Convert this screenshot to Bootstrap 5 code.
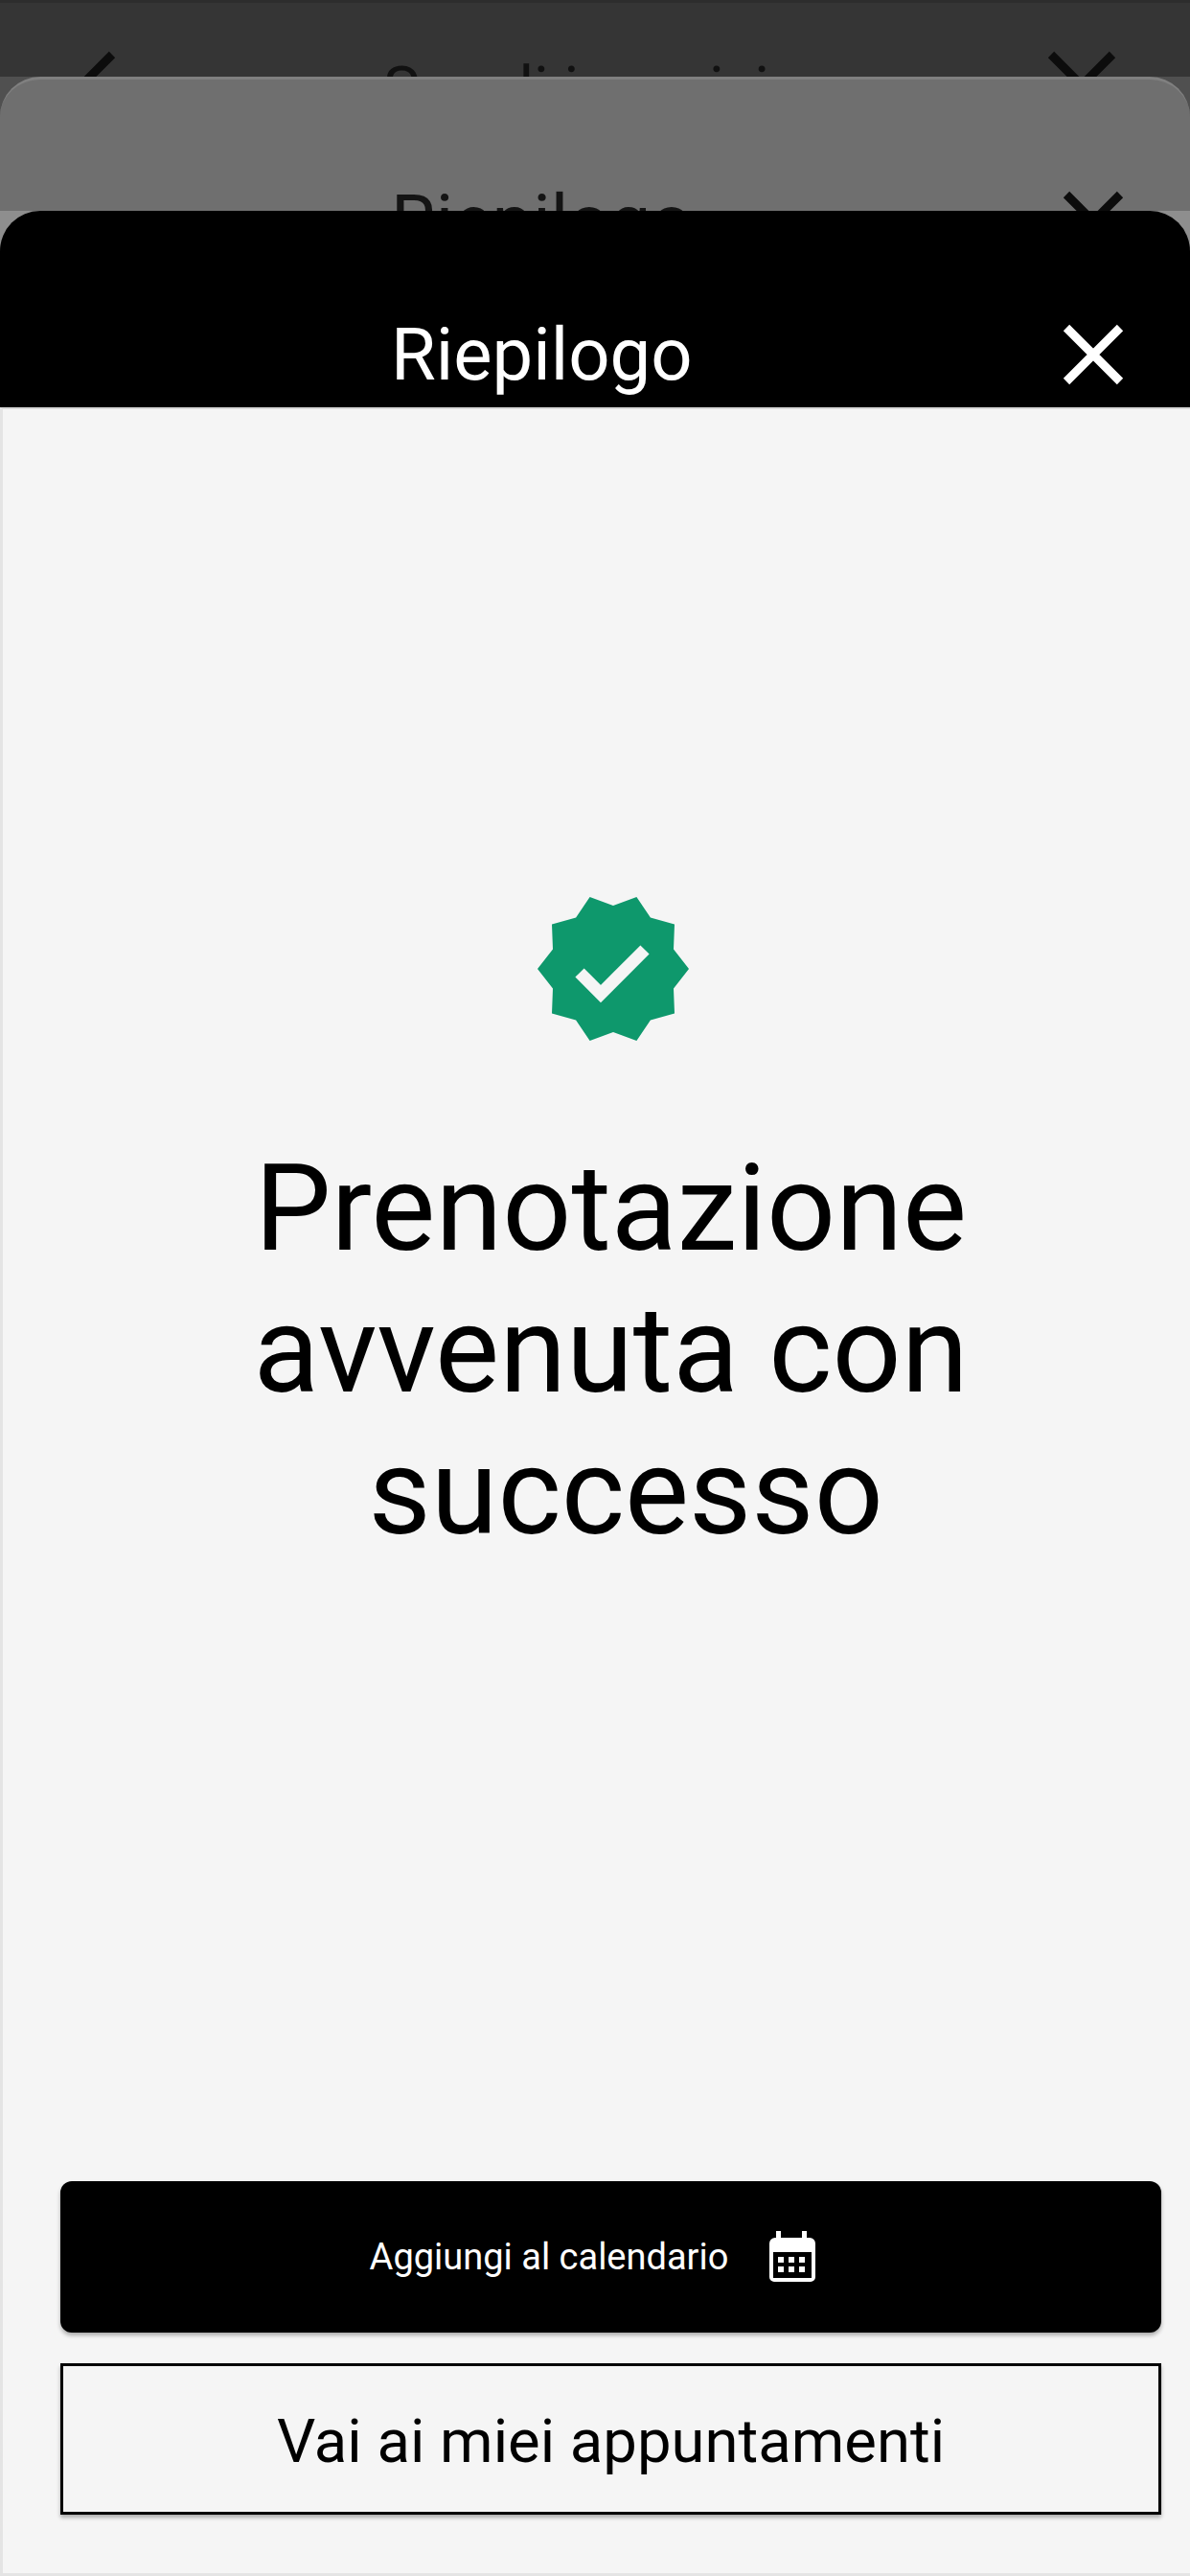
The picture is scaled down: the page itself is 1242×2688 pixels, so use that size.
<!DOCTYPE html>
<html lang="it">

<head>
  <meta charset="UTF-8">
  <title>Riepilogo</title>
  <link href="https://cdn.jsdelivr.net/npm/bootstrap@5.3.2/dist/css/bootstrap.min.css" rel="stylesheet">
  <style>
    body { background: #f5f5f5; font-family: Roboto, "Liberation Sans", sans-serif; }
    .schermo { height: 2688px; }
    .testa-base { height: 80px; background: #353535; border-top: 3px solid #2d2d2d; color: #111; }
    .testa-base .titolo { font-size: 64px; padding-left: 400px; padding-top: 49px; margin-left: -135px; }
    .testa-base .chiudi { margin-right: 75px; margin-top: 48px; }
    .chevron { margin-left: 75px; margin-top: 46px; }
    .dietro-media { background: #505050; }
    .foglio-medio { height: 140px; background: #6f6f6f; border-radius: 42px 42px 0 0; border-top: 3px solid #808080; color: #141414; }
    .dietro-nero { background: #8e8e8e; }
    .foglio-nero { height: 205px; background: #000; border-radius: 42px 42px 0 0; color: #fff; }
    .titolo { font-size: 76px; line-height: 84px; padding-left: 408px; padding-top: 108px; white-space: nowrap; }
    .foglio-medio .titolo { padding-top: 106px; }
    .chiudi { margin-right: 68px; margin-top: 117px; }
    .foglio-medio .chiudi { margin-top: 115px; }
    .contenuto { padding: 0 30px 61px 60px; border-left: 3px solid #e4e4e4; border-bottom: 3px solid #e4e4e4; border-top: 2px solid #d8d8d8; }
    .medaglia { margin-top: 504px; margin-left: 4px; }
    .messaggio { font-size: 126.5px; line-height: 148px; margin: 96px 0 0; font-weight: 400; color: #000; white-space: pre; }
    .pulsanti { gap: 32px; }
    .btn-calendario { height: 158px; background: #000; color: #fff; font-size: 38px; border: 0; border-radius: 12px; box-shadow: 0 3px 4px rgba(0, 0, 0, .3); }
    .btn-calendario:hover { background: #000; color: #fff; }
    .icona-calendario { margin-left: 43px; margin-right: 38px; }
    .btn-appuntamenti { height: 158px; padding-top: 12px; background: transparent; color: #000; font-size: 63.4px; border: 3px solid #000; border-radius: 0; box-shadow: 0 3px 4px rgba(0, 0, 0, .3); }
  </style>
</head>

<body>

  <div class="schermo d-flex flex-column">

    <div class="testa-base d-flex overflow-hidden">
      <svg class="chevron flex-shrink-0" width="60" height="90" viewBox="0 0 60 90"><path d="M42 8 L8 42 L42 76" fill="none" stroke="#0c0c0c" stroke-width="9"/></svg>
      <div class="titolo">Scegli i servizi</div>
      <svg class="chiudi ms-auto flex-shrink-0" width="76" height="76" viewBox="-38 -38 76 76"><path d="M-32 -32 L32 32 M32 -32 L-32 32" fill="none" stroke="#0c0c0c" stroke-width="9"/></svg>
    </div>

    <div class="dietro-media">
      <div class="foglio-medio d-flex overflow-hidden">
        <div class="titolo">Riepilogo</div>
        <svg class="chiudi ms-auto flex-shrink-0" width="66" height="66" viewBox="-33 -33 66 66"><path d="M-28 -28 L28 28 M28 -28 L-28 28" fill="none" stroke="#0c0c0c" stroke-width="9"/></svg>
      </div>
    </div>

    <div class="dietro-nero">
      <div class="foglio-nero d-flex overflow-hidden">
        <div class="titolo">Riepilogo</div>
        <svg class="chiudi ms-auto flex-shrink-0" width="66" height="66" viewBox="-33 -33 66 66"><path d="M-28 -28 L28 28 M28 -28 L-28 28" fill="none" stroke="#fff" stroke-width="9"/></svg>
      </div>
    </div>

    <div class="contenuto flex-grow-1 d-flex flex-column align-items-center">
      <svg class="medaglia" width="160" height="160" viewBox="-80 -80 160 160">
        <polygon fill="#0e986c" points="79,0 63,20.5 64,46.5 38.9,53.5 24.4,75.1 0,66 -24.4,75.1 -38.9,53.5 -64,46.5 -63,20.5 -79,0 -63,-20.5 -64,-46.5 -38.9,-53.5 -24.4,-75.1 0,-66 24.4,-75.1 38.9,-53.5 64,-46.5 63,-20.5"/>
        <path d="M-35 4 L-13 26 L33 -20" fill="none" stroke="#f5f5f5" stroke-width="13"/>
      </svg>

      <h1 class="messaggio text-center">Prenotazione
avvenuta con
 successo</h1>

      <div class="pulsanti mt-auto w-100 d-flex flex-column">
        <button class="btn btn-calendario w-100 d-flex align-items-center justify-content-center">
          <span>Aggiungi al calendario</span>
          <svg class="icona-calendario flex-shrink-0" width="48" height="54" viewBox="0 0 48 54">
            <path fill="#fff" d="M7 0h5v7h22v-7h5v7h3a6 6 0 0 1 6 6v35a5 5 0 0 1-5 5h-38a5 5 0 0 1-5-5v-35a6 6 0 0 1 6-6h1z"/>
            <rect x="4" y="22" width="40" height="27" fill="#000"/>
            <g fill="#fff">
              <rect x="9" y="27" width="6" height="6"/><rect x="20" y="27" width="6" height="6"/><rect x="31" y="27" width="6" height="6"/>
              <rect x="9" y="37" width="6" height="6"/><rect x="20" y="37" width="6" height="6"/><rect x="31" y="37" width="6" height="6"/>
            </g>
          </svg>
        </button>
        <button class="btn btn-appuntamenti w-100">Vai ai miei appuntamenti</button>
      </div>
    </div>

  </div>

  <script src="https://cdn.jsdelivr.net/npm/bootstrap@5.3.2/dist/js/bootstrap.bundle.min.js"></script>
</body>

</html>
